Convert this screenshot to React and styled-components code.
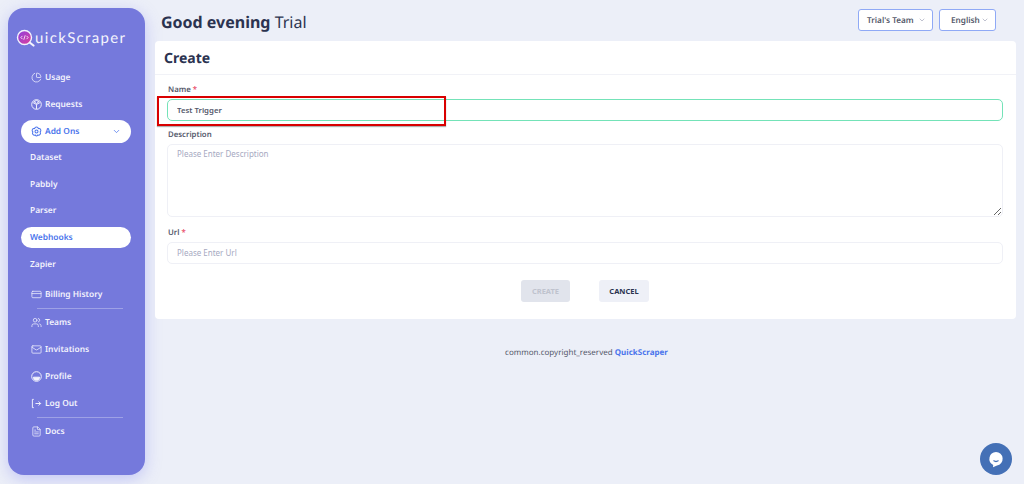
import React from "react"
import styled, { createGlobalStyle } from "styled-components"
import { ChartPie, CreditCard, Users, Mail, FileText, ChevronDown } from "lucide-react"

const GlobalStyle = createGlobalStyle`
  html, body {
    margin: 0;
    height: 100%;
    overflow: hidden;
    background: #eceff8;
    font-family: "Noto Sans", "Open Sans", sans-serif;
    text-rendering: geometricPrecision;
  }
  * {
    box-sizing: border-box;
  }
`

const Page = styled.div`
  display: flex;
  height: 484px;
  padding: 8px 8px 9px;
  gap: 10px;
`

const Sidebar = styled.aside`
  flex: 0 0 137px;
  background: #7579dc;
  border-radius: 16px;
  box-shadow: 0 4px 16px rgba(117, 121, 240, 0.35);
`

const Brand = styled.div`
  display: flex;
  align-items: center;
  height: 55.5px;
  padding: 5px 0 0 8px;
  color: #f4f4fd;
  font-family: "Lato", sans-serif;
  font-size: 15px;
  letter-spacing: 1.35px;
`

const Menu = styled.nav`
  display: flex;
  flex-direction: column;
`

const Item = styled.div`
  display: flex;
  align-items: center;
  gap: 3px;
  height: ${(p) => (p.$sub ? "26.6px" : "27px")};
  padding-left: ${(p) => (p.$sub ? "22px" : "23px")};
  margin-top: ${(p) => (p.$gap ? "4px" : "0")};
  color: #f3f3fd;
  font-size: 8.4px;
  font-weight: 600;
  svg {
    flex: none;
  }
`

const Pill = styled.div`
  display: flex;
  align-items: center;
  gap: 3px;
  height: ${(p) => p.$height}px;
  margin: ${(p) => ((p.$sub ? 26.6 : 27) - p.$height) / 2}px 14px ${(p) => ((p.$sub ? 26.6 : 27) - p.$height) / 2}px 13px;
  padding: ${(p) => (p.$sub ? "0 0 0 9px" : "0 10px 0 10px")};
  border-radius: 12px;
  background: #ffffff;
  color: #4a74ec;
  font-size: 8.4px;
  font-weight: 600;
  svg {
    flex: none;
  }
`

const PillLabel = styled.span`
  flex: 1;
`

const Divider = styled.div`
  height: 1px;
  margin: 0 22px 0 29px;
  background: rgba(255, 255, 255, 0.3);
`

const Main = styled.main`
  position: relative;
  flex: 1;
  display: flex;
  flex-direction: column;
  min-width: 0;
`

const TopBar = styled.header`
  display: flex;
  align-items: flex-start;
  justify-content: space-between;
  height: 33px;
  padding: 0 20px 0 6px;
`

const Greeting = styled.h1`
  margin: 0;
  color: #2b3350;
  font-size: 16px;
  font-weight: 400;
  line-height: 28px;
  b {
    font-weight: 700;
  }
`

const Selects = styled.div`
  display: flex;
  gap: 6px;
  margin-top: 1px;
`

const Select = styled.div`
  display: flex;
  align-items: center;
  justify-content: space-between;
  width: ${(p) => p.$width}px;
  height: 22px;
  padding: 0 6px 0 ${(p) => p.$left}px;
  border: 1px solid #8fa9f6;
  border-radius: 3px;
  background: #fff;
  color: #55596b;
  font-size: 8.2px;
  font-weight: 600;
  white-space: nowrap;
  svg {
    color: #a0a3b8;
  }
`

const Card = styled.section`
  background: #fff;
  border-radius: 4px;
  height: 278px;
`

const CardHeader = styled.div`
  display: flex;
  align-items: center;
  height: 34px;
  padding: 1px 0 0 9px;
  border-bottom: 1px solid #f1f2f7;
`

const CardTitle = styled.h2`
  margin: 0;
  color: #2b3350;
  font-size: 14px;
  font-weight: 700;
`

const Form = styled.form`
  display: flex;
  flex-direction: column;
  padding: 8px 13px 0 12px;
`

const Label = styled.label`
  display: block;
  height: 16px;
  margin-top: ${(p) => p.$top || 0}px;
  padding-left: 1px;
  color: #55596b;
  font-size: 7.8px;
  font-weight: 600;
  line-height: 14px;
  span {
    color: #ea5470;
  }
`

const Input = styled.input`
  display: block;
  width: 100%;
  height: 22px;
  padding: 0 9px;
  border: 1px solid ${(p) => (p.$focus ? "#74e3b8" : "#eff0f6")};
  border-radius: 5px;
  outline: none;
  background: #fff;
  color: #55596b;
  font-family: inherit;
  font-size: 7.8px;
  font-weight: 600;
  &::placeholder {
    color: #a6a9bf;
    font-weight: 400;
    font-size: 8px;
    opacity: 1;
  }
`

const TextArea = styled.textarea`
  display: block;
  width: 100%;
  height: 73px;
  padding: 3px 9px;
  border: 1px solid #eff0f6;
  border-radius: 5px;
  outline: none;
  font-family: inherit;
  font-size: 8px;
  &::placeholder {
    color: #a6a9bf;
    opacity: 1;
  }
`

const Actions = styled.div`
  display: flex;
  justify-content: center;
  gap: 29px;
  margin-top: 16px;
`

const Button = styled.button`
  width: ${(p) => p.$width}px;
  height: 22px;
  padding: 0;
  border: 0;
  border-radius: 3px;
  background: ${(p) => (p.disabled ? "#e1e4ec" : "#eef0f7")};
  color: ${(p) => (p.disabled ? "#bfc3ce" : "#2b3350")};
  font-family: inherit;
  font-size: 7.5px;
  font-weight: 700;
`

const Footer = styled.footer`
  margin-top: 28px;
  text-align: center;
  color: #55596b;
  font-size: 8px;
  line-height: 12px;
  transform: translateX(1px);
  b {
    color: #4a74ec;
    font-weight: 700;
  }
`

const Highlight = styled.div`
  position: absolute;
  left: 2px;
  top: 88px;
  width: 289px;
  height: 30px;
  border: 2px solid #d90000;
  box-shadow: 0 1px 1px rgba(0, 0, 0, 0.3);
  pointer-events: none;
`

const Chat = styled.div`
  position: absolute;
  right: 4px;
  bottom: 0;
  display: flex;
  align-items: center;
  justify-content: center;
  width: 32px;
  height: 32px;
  border-radius: 50%;
  background: #4470b6;
`

const Logo = () => (
  <svg width="19" height="19" viewBox="0 0 19 19" fill="none" aria-hidden="true">
    <defs>
      <linearGradient id="lens" x1="0" y1="0" x2="1" y2="1">
        <stop offset="0" stopColor="#8b3fe0" />
        <stop offset="1" stopColor="#e0409a" />
      </linearGradient>
    </defs>
    <path d="M13 13l4.5 3.5" stroke="#f4f4fd" strokeWidth="2.2" strokeLinecap="round" />
    <circle cx="8.5" cy="8.5" r="7" fill="url(#lens)" stroke="#f4f4fd" strokeWidth="1.4" />
    <path d="M6.4 6.9L4.9 8.5l1.5 1.6M10.6 6.9l1.500 1.6-1.500 1.6M9.2 6.3L7.8 10.7" stroke="#fff" strokeWidth=".8" fill="none" />
  </svg>
)

const BoxCircle = () => (
  <svg width="11" height="11" viewBox="0 0 16 16" fill="none" stroke="currentColor" strokeWidth="1.4">
    <circle cx="8" cy="8" r="7" />
    <path d="M8 8L2.5 5M8 8l5.5-3M8 8v6.5M4.5 4L8 2l3.5 2L8 6.500z" />
  </svg>
)

const FlowerBadge = () => (
  <svg width="11" height="11" viewBox="0 0 16 16" fill="none" stroke="currentColor" strokeWidth="1.5">
    <path d="M8 1.500c1.500 0 2.500 1 2.800 2.200 1.300-.3 2.700.3 3.300 1.600.6 1.300.1 2.600-.8 3.400.7 1 .8 2.400-.1 3.500-.9 1.100-2.300 1.300-3.400.8C9.300 13.900 8.700 14.500 8 14.500s-1.300-.6-1.800-1.500c-1.100.5-2.500.3-3.400-.8-.9-1.100-.8-2.500-.1-3.500-.9-.8-1.400-2.100-.8-3.400.6-1.300 2-1.900 3.300-1.600C5.500 2.500 6.500 1.500 8 1.500z" />
    <circle cx="8" cy="8" r="2.200" />
  </svg>
)

const Face = () => (
  <svg width="11" height="11" viewBox="0 0 16 16" fill="none" stroke="currentColor" strokeWidth="1.4">
    <circle cx="8" cy="8" r="7" />
    <path d="M3.500 9h9a4.500 4.500 0 0 1-9 0z" fill="currentColor" />
  </svg>
)

const Exit = () => (
  <svg width="11" height="11" viewBox="0 0 16 16" fill="none" stroke="currentColor" strokeWidth="1.4">
    <path d="M4 2H2v12h2M6.500 8H14M11 5l3 3-3 3" />
  </svg>
)

const ChatBubble = () => (
  <svg width="18" height="18" viewBox="0 0 18 18" aria-hidden="true">
    <path d="M9 2a6.800 6.800 0 0 1 1 13.500L6 17.200l.2-2.300A6.800 6.800 0 0 1 9 2z" fill="#fff" />
    <path d="M6.500 10.500c1.500 1.200 3.500 1.200 5 0" stroke="#4470b6" strokeWidth="1.300" fill="none" />
  </svg>
)

const icon = { size: 11, strokeWidth: 1.6 }

const App = () => (
  <>
    <GlobalStyle />
    <Page>
      <Sidebar>
        <Brand>
          <Logo />
          <span>uickScraper</span>
        </Brand>
        <Menu>
          <Item><ChartPie {...icon} />Usage</Item>
          <Item><BoxCircle />Requests</Item>
          <Pill $height={23}>
            <FlowerBadge />
            <PillLabel>Add Ons</PillLabel>
            <ChevronDown size={9} strokeWidth={2} />
          </Pill>
          <Item $sub>Dataset</Item>
          <Item $sub>Pabbly</Item>
          <Item $sub>Parser</Item>
          <Pill $sub $height={21}>Webhooks</Pill>
          <Item $sub>Zapier</Item>
          <Item $gap><CreditCard {...icon} />Billing History</Item>
          <Divider />
          <Item><Users {...icon} />Teams</Item>
          <Item><Mail {...icon} />Invitations</Item>
          <Item><Face />Profile</Item>
          <Item><Exit />Log Out</Item>
          <Divider />
          <Item><FileText {...icon} />Docs</Item>
        </Menu>
      </Sidebar>
      <Main>
        <TopBar>
          <Greeting><b>Good evening</b> Trial</Greeting>
          <Selects>
            <Select $width={75} $left={8}>Trial's Team<ChevronDown size={8} /></Select>
            <Select $width={57} $left={11}>English<ChevronDown size={8} /></Select>
          </Selects>
        </TopBar>
        <Card>
          <CardHeader>
            <CardTitle>Create</CardTitle>
          </CardHeader>
          <Form>
            <Label>Name <span>*</span></Label>
            <Input $focus readOnly value="Test Trigger" />
            <Label $top={7}>Description</Label>
            <TextArea placeholder="Please Enter Description" />
            <Label $top={9}>Url <span>*</span></Label>
            <Input placeholder="Please Enter Url" />
            <Actions>
              <Button type="button" disabled $width={49}>CREATE</Button>
              <Button type="button" $width={50}>CANCEL</Button>
            </Actions>
          </Form>
        </Card>
        <Footer>common.copyright_reserved <b>QuickScraper</b></Footer>
        <Highlight />
        <Chat><ChatBubble /></Chat>
      </Main>
    </Page>
  </>
)

export default App
